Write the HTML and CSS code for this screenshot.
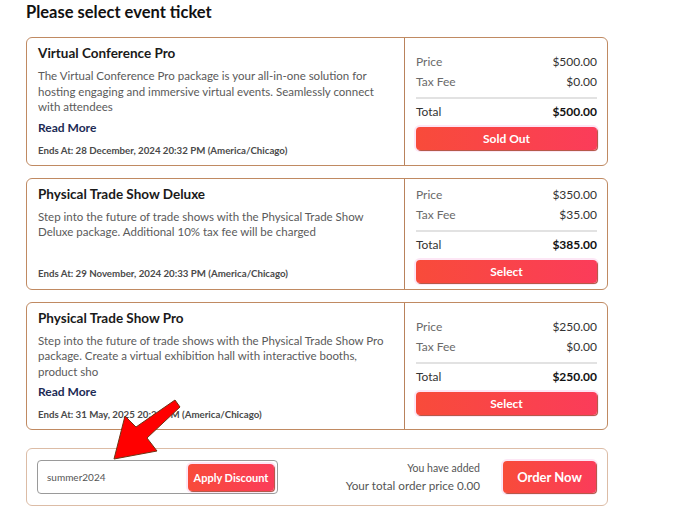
FILE: index.html
```html
<!DOCTYPE html>
<html>
<head>
<meta charset="utf-8">
<link rel="stylesheet" href="styles.css">
</head>
<body>
<div class="page">
  <h1 class="heading">Please select event ticket</h1>

  <div class="ticket">
    <div class="info">
      <div class="name">Virtual Conference Pro</div>
      <p class="desc">The Virtual Conference Pro package is your all-in-one solution for hosting engaging and immersive virtual events. Seamlessly connect with attendees</p>
      <a class="more">Read More</a>
      <div class="ends">Ends At: 28 December, 2024 20:32 PM (America/Chicago)</div>
    </div>
    <div class="pricing">
      <div class="prices">
        <div class="row"><span>Price</span><span class="val">$500.00</span></div>
        <div class="row"><span>Tax Fee</span><span class="val">$0.00</span></div>
        <div class="rule"></div>
        <div class="row total"><span>Total</span><span class="val">$500.00</span></div>
        <button class="btn">Sold Out</button>
      </div>
    </div>
  </div>

  <div class="ticket">
    <div class="info">
      <div class="name">Physical Trade Show Deluxe</div>
      <p class="desc">Step into the future of trade shows with the Physical Trade Show Deluxe package. Additional 10% tax fee will be charged</p>
      <div class="spacer"></div>
      <div class="ends">Ends At: 29 November, 2024 20:33 PM (America/Chicago)</div>
    </div>
    <div class="pricing">
      <div class="prices">
        <div class="row"><span>Price</span><span class="val">$350.00</span></div>
        <div class="row"><span>Tax Fee</span><span class="val">$35.00</span></div>
        <div class="rule"></div>
        <div class="row total"><span>Total</span><span class="val">$385.00</span></div>
        <button class="btn">Select</button>
      </div>
    </div>
  </div>

  <div class="ticket">
    <div class="info">
      <div class="name">Physical Trade Show Pro</div>
      <p class="desc">Step into the future of trade shows with the Physical Trade Show Pro package. Create a virtual exhibition hall with interactive booths, product sho</p>
      <a class="more">Read More</a>
      <div class="ends">Ends At: 31 May, 2025 20:34 PM (America/Chicago)</div>
    </div>
    <div class="pricing">
      <div class="prices">
        <div class="row"><span>Price</span><span class="val">$250.00</span></div>
        <div class="row"><span>Tax Fee</span><span class="val">$0.00</span></div>
        <div class="rule"></div>
        <div class="row total"><span>Total</span><span class="val">$250.00</span></div>
        <button class="btn">Select</button>
      </div>
    </div>
  </div>

  <div class="checkout">
    <div class="coupon">
      <span class="code">summer2024</span>
      <button class="btn apply">Apply Discount</button>
    </div>
    <div class="summary">
      <div class="added">You have added</div>
      <div class="totalprice">Your total order price 0.00</div>
    </div>
    <button class="btn order">Order Now</button>
  </div>

  <svg class="arrow" width="80" height="70" viewBox="0 0 80 70">
    <polygon points="4,63 15,20 26,31 65,4 70,11 37,42 47,55" fill="#ff0000" stroke="#6e3414" stroke-width="1" stroke-linejoin="round"/>
  </svg>
</div>
</body>
</html>
```

FILE: styles.css
```css
* { box-sizing: border-box; }
html, body { margin: 0; padding: 0; background: #fff; }
body { font-family: Lato, "Noto Sans", sans-serif; color: #222; }

.page {
  position: relative;
  width: 582px;
  margin-left: 26px;
  padding-top: 2px;
}

.heading {
  margin: 0 0 15px;
  font-size: 16.5px;
  line-height: 20px;
  font-weight: 700;
  color: #111;
}

.ticket {
  display: flex;
  border: 1px solid #c08a62;
  border-radius: 6px;
  margin-bottom: 12px;
  background: #fff;
}

.info {
  flex: 0 0 378px;
  display: flex;
  flex-direction: column;
  align-items: flex-start;
  padding: 6px 12px 8px 11px;
  border-right: 1px solid #b9825c;
}

.name {
  font-size: 13.5px;
  line-height: 18px;
  font-weight: 700;
  color: #1a1a1a;
}

.desc {
  margin: 6px 0 0;
  font-size: 11.5px;
  line-height: 15.5px;
  color: #5a5a5a;
}

.more {
  margin-top: 5px;
  font-size: 12px;
  line-height: 16px;
  font-weight: 700;
  color: #1d2b55;
}

.spacer { height: 19px; }

.ends {
  margin-top: 7px;
  font-size: 9.7px;
  line-height: 14px;
  font-weight: 700;
  color: #4a4a4a;
}

.pricing {
  flex: 1;
  display: flex;
  align-items: center;
  padding: 6px 10px 6px 11px;
}

.prices { width: 100%; }

.row {
  display: flex;
  justify-content: space-between;
  font-size: 12px;
  line-height: 20px;
  color: #6a6a6a;
}
.row .val { color: #333; }

.rule {
  height: 2px;
  background: #e2e2e2;
  margin: 5px 0 3px;
}

.row.total { color: #333; }
.row.total .val { font-weight: 700; color: #111; }

.btn {
  display: block;
  border: none;
  border-radius: 4px;
  background: linear-gradient(90deg, #f84b3a, #fb3c5a);
  color: #fff;
  font-family: Lato, "Noto Sans", sans-serif;
  font-weight: 700;
  font-size: 12px;
  box-shadow: 1px 1px 0 #b55a4a, 0 0 0 2px #fde6f5;
  padding: 0;
}

.prices .btn {
  width: 100%;
  height: 23px;
  margin-top: 5px;
}

.checkout {
  display: flex;
  align-items: center;
  margin-top: 18px;
  height: 58px;
  border: 1px solid #dcbca6;
  border-radius: 6px;
  padding: 0 11px 0 10px;
}

.coupon {
  display: flex;
  align-items: center;
  justify-content: space-between;
  width: 241px;
  height: 34px;
  border: 1px solid #9a9a9a;
  border-radius: 4px;
  padding: 0 3px 0 9px;
}

.code {
  font-size: 10px;
  color: #555;
}

.btn.apply {
  width: 86px;
  height: 27px;
  font-size: 11px;
}

.summary {
  margin-left: auto;
  text-align: right;
  color: #555;
}

.added { font-size: 10.5px; line-height: 16px; }
.totalprice { font-size: 11.7px; line-height: 18px; }

.btn.order {
  margin-left: 23px;
  width: 93px;
  height: 32px;
  font-size: 13px;
}

.arrow {
  position: absolute;
  left: 84px;
  top: 396px;
}
```
